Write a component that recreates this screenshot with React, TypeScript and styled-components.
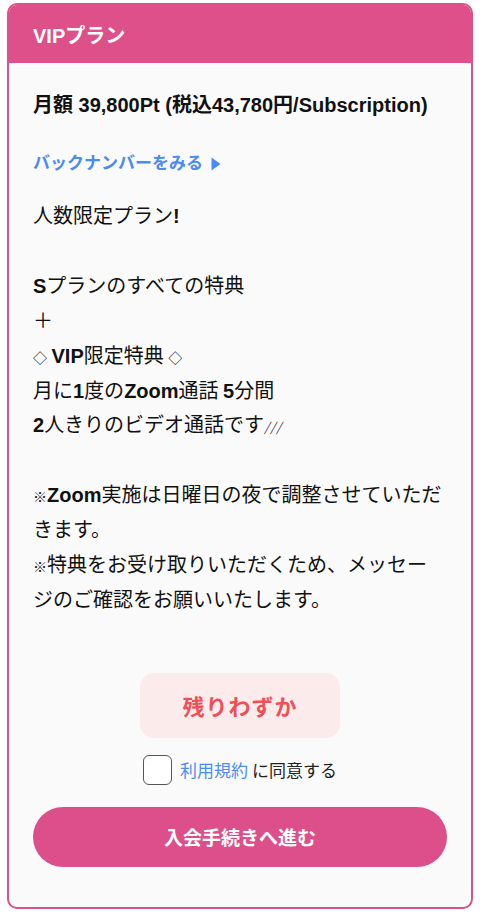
import React from 'react';
import styled, { createGlobalStyle } from 'styled-components';

const GlobalStyle = createGlobalStyle`
  html, body {
    margin: 0;
    padding: 0;
    background: #ffffff;
  }
  body {
    font-family: "Liberation Sans", "Noto Sans CJK JP", sans-serif;
    color: #111;
  }
`;

const Page = styled.div`
  padding: 3px 7px;
`;

const Card = styled.div`
  border: 2px solid #dd508a;
  border-radius: 10px;
  overflow: hidden;
  background: #fafafa;
  height: 906px;
  box-sizing: border-box;
  display: flex;
  flex-direction: column;
`;

const Header = styled.div`
  background: #dd508a;
  color: #fff;
  height: 58px;
  display: flex;
  align-items: center;
  padding-left: 24px;
  font-size: 20px;
  font-weight: 700;
`;

const Body = styled.div`
  padding: 22px 27px 0 24px;
  display: flex;
  flex-direction: column;
`;

const Price = styled.div`
  font-size: 20px;
  font-weight: 700;
  line-height: 40px;
`;

const BackLink = styled.a`
  margin-top: 26px;
  color: #4b8bf5;
  font-size: 17px;
  font-weight: 700;
  text-decoration: none;
  display: flex;
  align-items: center;
  gap: 8px;
  line-height: 26px;
`;

const Description = styled.div`
  margin-top: 21px;
  font-family: "Noto Sans CJK JP", sans-serif;
  font-size: 20px;
  line-height: 34.9px;
  white-space: pre-wrap;
`;

const B = styled.b`
  font-family: "Liberation Sans", "Noto Sans CJK JP", sans-serif;
  font-weight: 700;
  line-height: 1;
`;

const Symbol = styled.span`
  font-size: 14px;
  line-height: 1;
`;

const Tiny = styled.span`
  font-size: 13px;
  line-height: 1;
  letter-spacing: 1px;
  color: #444;
  font-style: italic;
`;

const Actions = styled.div`
  display: flex;
  flex-direction: column;
  align-items: center;
  padding: 0 24px;
  margin-top: 56px;
`;

const Remaining = styled.div`
  width: 200px;
  height: 65px;
  border-radius: 14px;
  background: #fcebeb;
  color: #ef5058;
  font-size: 22px;
  font-weight: 700;
  display: flex;
  align-items: center;
  justify-content: center;
  letter-spacing: 1px;
`;

const AgreeRow = styled.label`
  margin-top: 17px;
  display: flex;
  align-items: center;
  gap: 8px;
  font-size: 17px;
  color: #222;
`;

const Check = styled.span`
  width: 27px;
  height: 28px;
  border: 1.5px solid #555;
  border-radius: 6px;
  background: #fff;
`;

const Terms = styled.span`
  color: #4b8bf5;
  margin-right: 4px;
`;

const Submit = styled.button`
  margin-top: 22px;
  width: 414px;
  height: 60px;
  border: none;
  border-radius: 30px;
  background: #dc4f8a;
  color: #fff;
  font-family: inherit;
  font-size: 19px;
  font-weight: 700;
`;

const Triangle = () => (
  <svg width="10" height="14" viewBox="0 0 10 14">
    <path d="M0.5 0.5 L9.5 7 L0.5 13.5 Z" fill="#4b8bf5" />
  </svg>
);

export default function App() {
  return (
    <>
      <GlobalStyle />
      <Page>
        <Card>
          <Header>VIPプラン</Header>
          <Body>
            <Price>月額 39,800Pt (税込43,780円/Subscription)</Price>
            <BackLink href="#">
              バックナンバーをみる
              <Triangle />
            </BackLink>
            <Description>
              人数限定プラン<B>!</B>
              {'\n\n'}
              <B>S</B>プランのすべての特典
              {'\n'}＋{'\n'}
              <Symbol>◇</Symbol> <B>VIP</B>限定特典 <Symbol>◇</Symbol>
              {'\n'}
              月に<B>1</B>度の<B>Zoom</B>通話 <B>5</B>分間
              {'\n'}
              <B>2</B>人きりのビデオ通話です<Tiny>///</Tiny>
              {'\n\n'}
              <Symbol>※</Symbol><B>Zoom</B>実施は日曜日の夜で調整させていただきます。
              {'\n'}
              <Symbol>※</Symbol>特典をお受け取りいただくため、メッセージのご確認をお願いいたします。
            </Description>
          </Body>
          <Actions>
            <Remaining>残りわずか</Remaining>
            <AgreeRow>
              <Check />
              <span>
                <Terms>利用規約</Terms>に同意する
              </span>
            </AgreeRow>
            <Submit>入会手続きへ進む</Submit>
          </Actions>
        </Card>
      </Page>
    </>
  );
}
